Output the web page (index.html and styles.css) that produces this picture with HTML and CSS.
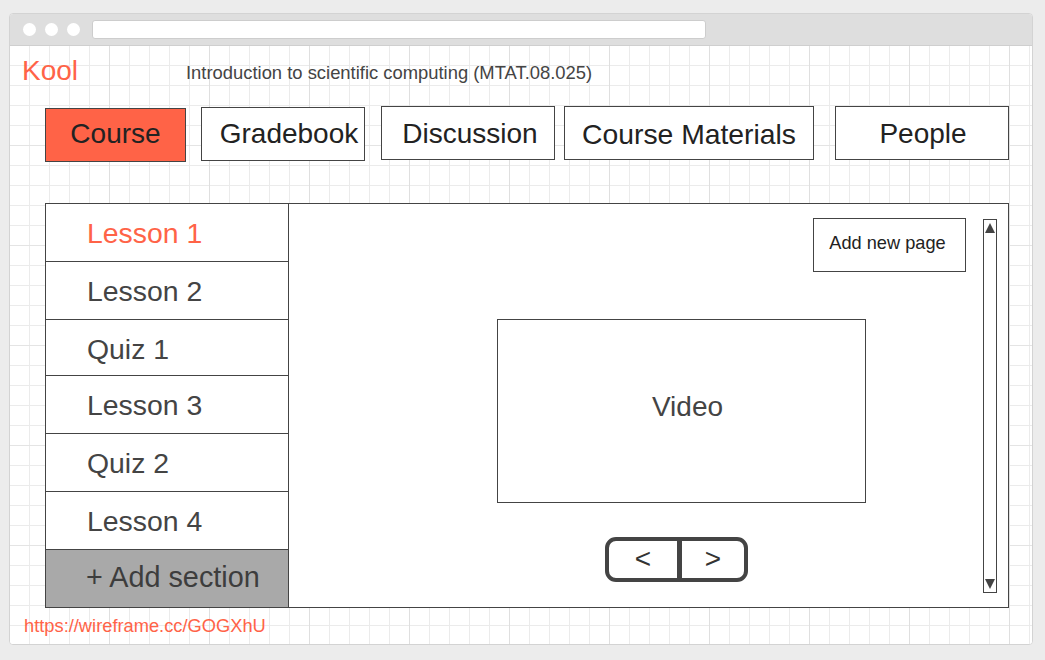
FILE: index.html
```html
<!DOCTYPE html>
<html lang="en">
<head>
<meta charset="utf-8">
<title>Kool</title>
<link rel="stylesheet" href="styles.css">
</head>
<body>
<div class="window">
  <div class="titlebar">
    <span class="dot"></span>
    <span class="dot"></span>
    <span class="dot"></span>
    <div class="url"></div>
  </div>
  <div class="canvas">
    <header class="header">
      <div class="brand">Kool</div>
      <div class="course-title">Introduction to scientific computing (MTAT.08.025)</div>
    </header>
    <nav class="tabs">
      <div class="tab tab-course active">Course</div>
      <div class="tab tab-grade">Gradebook</div>
      <div class="tab tab-disc">Discussion</div>
      <div class="tab tab-mat">Course Materials</div>
      <div class="tab tab-people">People</div>
    </nav>
    <section class="panel">
      <ul class="sections">
        <li class="row current">Lesson 1</li>
        <li class="row">Lesson 2</li>
        <li class="row short">Quiz 1</li>
        <li class="row">Lesson 3</li>
        <li class="row">Quiz 2</li>
        <li class="row">Lesson 4</li>
        <li class="row add">+ Add section</li>
      </ul>
      <div class="content">
        <div class="stage">
          <div class="add-page">Add new page</div>
          <div class="video">Video</div>
          <div class="pager">
            <div class="pg pg-prev">&lt;</div>
            <div class="pg-divider"></div>
            <div class="pg pg-next">&gt;</div>
          </div>
        </div>
        <div class="scrollbar">
          <span class="tri tri-up"></span>
          <span class="tri tri-down"></span>
        </div>
      </div>
    </section>
    <a class="link" href="#">https://wireframe.cc/GOGXhU</a>
  </div>
</div>
</body>
</html>
```
FILE: styles.css
```css
* { box-sizing: border-box; }

html, body {
  margin: 0;
  padding: 0;
}

body {
  background: #ececec;
  font-family: "Liberation Sans", Arial, sans-serif;
  width: 1045px;
  height: 660px;
  overflow: hidden;
  padding: 13px 0 0 9px;
}

.window {
  width: 1024px;
  height: 632px;
  border: 1px solid #d3d3d3;
  border-radius: 4px;
  overflow: hidden;
  display: flex;
  flex-direction: column;
  background: #fff;
}

.titlebar {
  height: 32px;
  flex: 0 0 32px;
  background: #dedede;
  border-bottom: 1px solid #cfcfcf;
  display: flex;
  align-items: center;
  padding-left: 13px;
  gap: 9px;
}

.dot {
  width: 13px;
  height: 13px;
  border-radius: 50%;
  background: #fff;
}

.url {
  margin-left: 3px;
  width: 614px;
  height: 19px;
  background: #fff;
  border: 1px solid #cdcdcd;
  border-radius: 3px;
}

.canvas {
  flex: 1;
  background-color: #fff;
  background-image:
    linear-gradient(to right, #dfdfdf 1px, transparent 1px),
    linear-gradient(to bottom, #e4e4e4 1px, transparent 1px),
    linear-gradient(to right, #ebebeb 1px, transparent 1px),
    linear-gradient(to bottom, #ebebeb 1px, transparent 1px);
  background-size: 100px 100px, 100px 100px, 20px 20px, 20px 20px;
  background-position: -1px -1px;
  padding: 9px 0 0 0;
  display: flex;
  flex-direction: column;
}

.header {
  display: flex;
  align-items: flex-start;
  padding-left: 12px;
  height: 32px;
}

.brand {
  width: 164px;
  font-size: 28px;
  line-height: 32px;
  color: #ff6347;
}

.course-title {
  margin-top: 7px;
  font-size: 18.4px;
  line-height: 21px;
  color: #444;
}

.tabs {
  display: flex;
  align-items: flex-start;
  margin-top: 19px;
  padding-left: 35px;
}

.tab {
  height: 54px;
  border: 1px solid #444;
  background: #fff;
  color: #222;
  font-size: 28px;
  display: flex;
  align-items: center;
  justify-content: center;
  white-space: nowrap;
}

.tab.active { background: #ff6347; }

.tab-course { width: 141px; margin-top: 2px; padding-bottom: 2px; }
.tab-grade { width: 164px; margin-left: 15px; margin-top: 1px; padding-left: 12px; }
.tab-disc { width: 174px; margin-left: 16px; padding-top: 2px; padding-left: 4px; }
.tab-mat { width: 250px; margin-left: 9px; padding-top: 2px; font-size: 28.3px; }
.tab-people { width: 174px; margin-left: 21px; padding-top: 2px; padding-left: 2px; }

.panel {
  margin: 41px 0 0 35px;
  width: 964px;
  height: 405px;
  border: 1px solid #444;
  background: #fff;
  display: flex;
}

.sections {
  list-style: none;
  margin: 0;
  padding: 0;
  width: 243px;
  border-right: 1px solid #444;
  display: flex;
  flex-direction: column;
}

.row {
  height: 58px;
  border-bottom: 1px solid #444;
  display: flex;
  align-items: center;
  padding: 1px 0 0 41px;
  font-size: 28.4px;
  color: #444;
}

.row.short { height: 56px; padding-top: 4px; }

.row.current { color: #ff6347; }

.row.add {
  flex: 1;
  height: auto;
  border-bottom: none;
  background: #a9a9a9;
  color: #3d3d3d;
  font-size: 28.8px;
  padding: 0 0 2px 40px;
}

.content {
  flex: 1;
  display: flex;
}

.stage {
  flex: 1;
  display: flex;
  flex-direction: column;
}

.add-page {
  align-self: flex-end;
  margin: 14px 17px 0 0;
  width: 153px;
  height: 54px;
  border: 1px solid #444;
  display: flex;
  align-items: center;
  justify-content: center;
  padding: 0 4px 4px 0;
  font-size: 18.2px;
  color: #222;
}

.video {
  margin: 47px 0 0 208px;
  width: 369px;
  height: 184px;
  border: 1px solid #444;
  display: flex;
  align-items: center;
  justify-content: center;
  padding: 0 0 8px 12px;
  font-size: 28px;
  color: #444;
}

.pager {
  margin: 34px 0 0 316px;
  width: 143px;
  height: 45px;
  border: 4px solid #444;
  border-radius: 11px;
  display: flex;
}

.pg {
  display: flex;
  align-items: center;
  justify-content: center;
  font-size: 28px;
  color: #333;
  padding-bottom: 2px;
}

.pg-prev { width: 68px; }
.pg-next { flex: 1; }

.pg-divider {
  width: 5px;
  background: #444;
}

.scrollbar {
  margin: 15px 11px 14px 0;
  width: 14px;
  border: 1px solid #444;
  display: flex;
  flex-direction: column;
  align-items: center;
  justify-content: space-between;
  padding: 3px 0 3px 0;
}

.tri {
  width: 0;
  height: 0;
  border-left: 5px solid transparent;
  border-right: 5px solid transparent;
}

.tri-up { border-bottom: 10px solid #444; }
.tri-down { border-top: 10px solid #444; }

.link {
  margin: 7px 0 0 14px;
  font-size: 18.3px;
  line-height: 21px;
  color: #ff6347;
  text-decoration: none;
  align-self: flex-start;
}
```
